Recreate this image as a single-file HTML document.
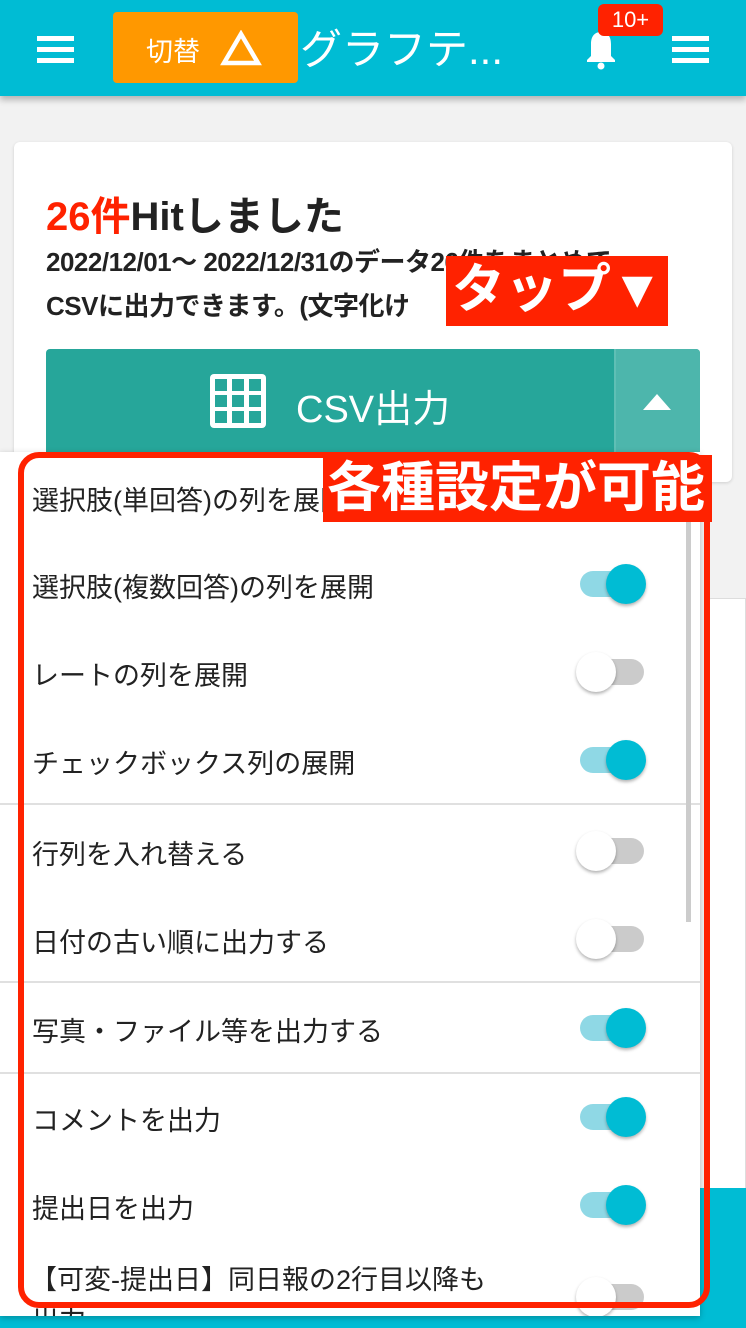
<!DOCTYPE html>
<html><head><meta charset="utf-8">
<style>
*{margin:0;padding:0;box-sizing:border-box}
body{width:746px;height:1328px;overflow:hidden;background:#f2f2f2;position:relative;font-family:"Liberation Sans","Noto Sans CJK JP",sans-serif;color:#222}
.abs{position:absolute}
.hdr{left:0;top:0;width:746px;height:96px;background:#00bcd4;box-shadow:0 4px 6px rgba(0,0,0,.25)}
.ham{width:37px;height:5px;background:#fff;box-shadow:0 11px 0 #fff,0 22px 0 #fff}
.card{left:14px;top:142px;width:718px;height:340px;background:#fff;border-radius:6px;box-shadow:0 1px 3px rgba(0,0,0,.15)}
.panel{left:0;top:452px;width:700px;height:864px;background:#fff;box-shadow:0 2px 6px rgba(0,0,0,.25);overflow:hidden}
.row{position:absolute;left:32px;font-size:27px;color:#222;white-space:nowrap}
.div{position:absolute;left:0;width:700px;height:2px;background:#e0e0e0}
.tg{position:absolute;left:580px;width:66px;height:28px}
.tg .tr{position:absolute;left:0;top:1px;width:64px;height:26px;border-radius:13px}
.tg .kn{position:absolute;top:-6px;width:40px;height:40px;border-radius:50%;box-shadow:0 2px 3px rgba(0,0,0,.3)}
.on .tr{background:#8fd8e5}.on .kn{left:26px;background:#00bcd4}
.off .tr{background:#cbcbcb;left:4px;width:60px}.off .kn{left:-4px;background:#fff}
</style></head><body>
<div class="abs hdr"></div>
<div class="abs ham" style="left:37px;top:36px"></div>
<div class="abs ham" style="left:672px;top:36px"></div>
<div class="abs" style="left:113px;top:12px;width:185px;height:71px;background:#ff9800;border-radius:4px"></div>
<div class="abs" style="left:146px;top:30px;color:#fff;font-size:27px">切替</div>
<svg class="abs" style="left:220px;top:30px" width="42" height="36"><polygon points="21,4 38,33 4,33" fill="none" stroke="#fff" stroke-width="4.5"/></svg>
<div class="abs" style="left:300px;top:16px;color:#fff;font-size:42px;white-space:nowrap">グラフテ...</div>
<svg class="abs" style="left:583px;top:28px" width="36" height="42"><path d="M18 4c-7 0-10 5-10 12v12l-4 4v2h28v-2l-4-4V16c0-7-3-12-10-12z" fill="#fff"/><circle cx="18" cy="38" r="3.5" fill="#fff"/></svg>
<div class="abs" style="left:598px;top:4px;width:65px;height:32px;background:#ff2200;border-radius:6px;color:#fff;font-size:22px;text-align:center;line-height:32px">10+</div>

<div class="abs card"></div>
<div class="abs" style="left:46px;top:184px;font-size:40px;font-weight:bold;white-space:nowrap"><span style="color:#ff2200">26件</span>Hitしました</div>
<div class="abs" style="left:46px;top:240px;font-size:26px;font-weight:bold;white-space:nowrap;line-height:44px;letter-spacing:-0.5px">2022/12/01～ 2022/12/31のデータ26件をまとめて<br>CSVに出力できます。(文字化け</div>
<div class="abs" style="left:446px;top:256px;width:222px;height:70px;background:#ff2200;color:#fff;font-size:53px;font-weight:bold;line-height:68px;padding-left:6px;white-space:nowrap">タップ▼</div>
<div class="abs" style="left:46px;top:349px;width:654px;height:110px;background:#26a69a;border-radius:4px"></div>
<div class="abs" style="left:614px;top:349px;width:86px;height:110px;background:#4db6ac;border-left:2px solid #5fbfb5;border-radius:0 4px 4px 0"></div>
<svg class="abs" style="left:208px;top:372px" width="60" height="58"><rect x="2" y="2" width="56" height="54" rx="4" fill="#fff"/><g fill="#26a69a"><rect x="7" y="7" width="12" height="12"/><rect x="24" y="7" width="12" height="12"/><rect x="41" y="7" width="12" height="12"/><rect x="7" y="23" width="12" height="12"/><rect x="24" y="23" width="12" height="12"/><rect x="41" y="23" width="12" height="12"/><rect x="7" y="39" width="12" height="12"/><rect x="24" y="39" width="12" height="12"/><rect x="41" y="39" width="12" height="12"/></g></svg>
<div class="abs" style="left:296px;top:378px;color:#fff;font-size:38px;white-space:nowrap">CSV出力</div>
<svg class="abs" style="left:641px;top:392px" width="32" height="20"><polygon points="16,2 30,18 2,18" fill="#fff"/></svg>

<div class="abs" style="left:705px;top:598px;width:41px;height:600px;background:#fff;border:1px solid #ddd;border-radius:6px 0 0 0"></div>
<div class="abs" style="left:700px;top:1188px;width:46px;height:140px;background:#00bcd4"></div>
<div class="abs" style="left:0;top:1316px;width:746px;height:12px;background:#00bcd4"></div>

<div class="abs panel">
<div class="row" style="top:27px">選択肢(単回答)の列を展開</div>
<div class="row" style="top:114px">選択肢(複数回答)の列を展開</div>
<div class="tg on" style="top:118px"><div class="tr"></div><div class="kn"></div></div>
<div class="row" style="top:202px">レートの列を展開</div>
<div class="tg off" style="top:206px"><div class="tr"></div><div class="kn"></div></div>
<div class="row" style="top:290px">チェックボックス列の展開</div>
<div class="tg on" style="top:294px"><div class="tr"></div><div class="kn"></div></div>
<div class="div" style="top:351px"></div>
<div class="row" style="top:381px">行列を入れ替える</div>
<div class="tg off" style="top:385px"><div class="tr"></div><div class="kn"></div></div>
<div class="row" style="top:469px">日付の古い順に出力する</div>
<div class="tg off" style="top:473px"><div class="tr"></div><div class="kn"></div></div>
<div class="div" style="top:529px"></div>
<div class="row" style="top:558px">写真・ファイル等を出力する</div>
<div class="tg on" style="top:562px"><div class="tr"></div><div class="kn"></div></div>
<div class="div" style="top:620px"></div>
<div class="row" style="top:647px">コメントを出力</div>
<div class="tg on" style="top:651px"><div class="tr"></div><div class="kn"></div></div>
<div class="row" style="top:735px">提出日を出力</div>
<div class="tg on" style="top:739px"><div class="tr"></div><div class="kn"></div></div>
<div class="row" style="top:806px;left:30px">【可変-提出日】同日報の2行目以降も</div>
<div class="row" style="top:846px">出力</div>
<div class="tg off" style="top:831px"><div class="tr"></div><div class="kn"></div></div>
<div class="abs" style="left:686px;top:70px;width:5px;height:400px;background:#ccc"></div>
</div>

<svg class="abs" style="left:0;top:440px" width="746" height="888"><rect x="21" y="15" width="686" height="850" rx="18" fill="none" stroke="#ff2200" stroke-width="6"/></svg>
<div class="abs" style="left:323px;top:455px;width:389px;height:67px;background:#ff2200;color:#fff;font-size:54px;font-weight:bold;line-height:66px;padding-left:4px;white-space:nowrap;overflow:hidden">各種設定が可能</div>
</body></html>
